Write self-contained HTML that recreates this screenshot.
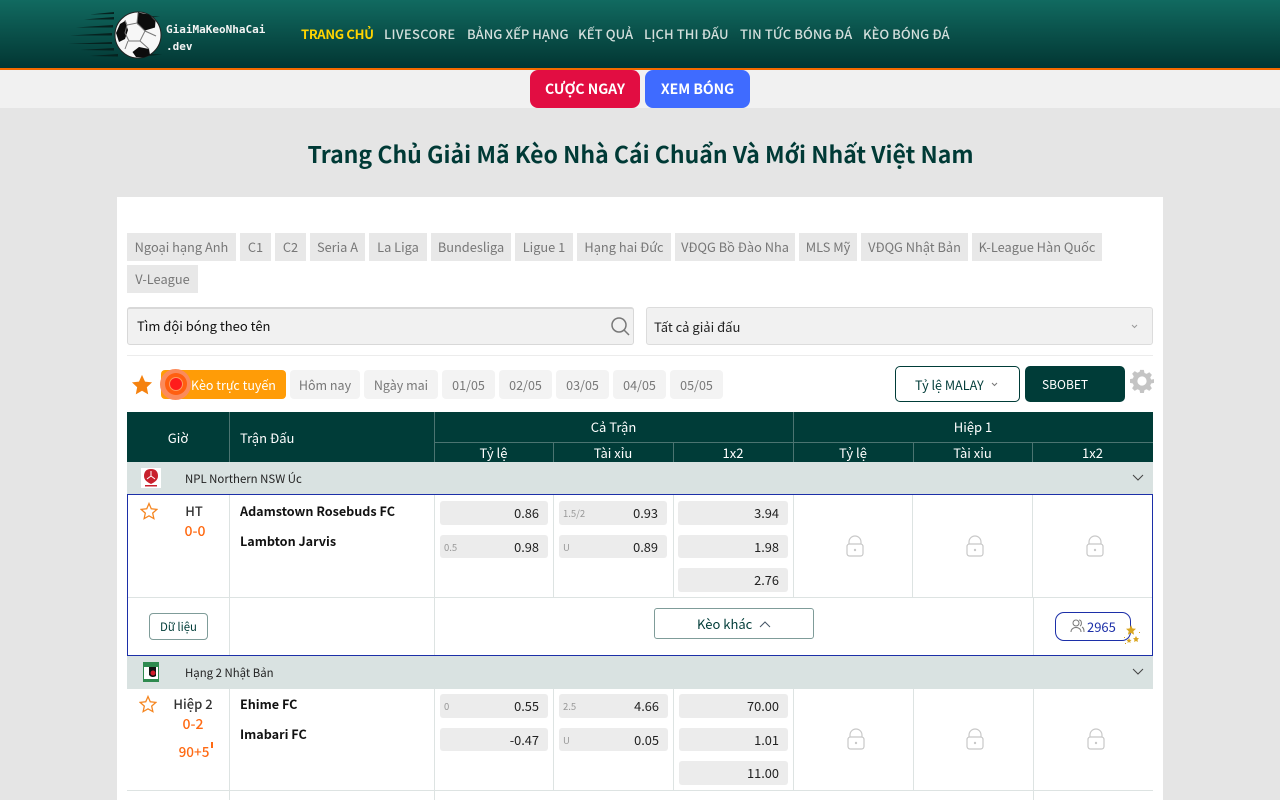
<!DOCTYPE html>
<html lang="vi"><head><meta charset="utf-8"><title>Trang Chủ Giải Mã Kèo Nhà Cái</title>
<style>
*{box-sizing:border-box;margin:0;padding:0}
html,body{width:1280px;height:800px;overflow:hidden;background:#e5e5e5}
body{position:relative;font-family:"Noto Sans CJK JP","Liberation Sans",sans-serif;font-size:13px;color:#222}
.a,.t,.c,.chip,.tab,.o,.l,.h,.v{position:absolute}
.t{white-space:nowrap;line-height:20px}
.c{white-space:nowrap;line-height:20px;text-align:center}
.nav{position:absolute;top:24px;line-height:20px;font-size:13px;font-weight:500;color:#d3dfdc;white-space:nowrap}
.chip{height:28px;background:#e8e8e8;color:#777;font-size:12.8px;line-height:28px;text-align:center;white-space:nowrap}
.tab{top:370px;height:29px;background:#f3f3f3;color:#777;font-size:12.5px;line-height:29px;text-align:center;border-radius:4px;white-space:nowrap}
.o{background:#ececec;border-radius:3px;height:24px;font-size:12.8px;line-height:24px;text-align:right;padding-right:9px;color:#222}
.o i{position:absolute;left:4px;top:0;font-style:normal;font-size:9.5px;color:#999}
.l{background:#d9e2e1}
.h{height:1px}
.v{width:1px}
.team{position:absolute;left:240px;font-weight:700;font-size:12.6px;line-height:20px;color:#111;white-space:nowrap}
.hd{color:#fff;font-size:13px}
.or{color:#ff6a13;font-weight:500;font-size:14px}
</style></head><body>

<div class="a" style="left:0;top:0;width:1280px;height:70px;background:linear-gradient(#116a60,#023633);border-bottom:2px solid #f56a00"></div>
<svg class="a" style="left:68px;top:6px" width="100" height="58" viewBox="0 0 100 58">
<g fill="#06221f"><path d="M46 6L22 8.500 46 8zM46 11L16 13.500 46 13.500zM45 19L8 21.500 45 21.500zM44 27L2 29.500 44 29.500zM44 36L0 38 44 38zM46 42L12 44 46 44.500zM50 48L22 50 50 50.500zM78 10L92 10.500 78 12zM80 48L94 48.500 80 50z"/></g>
<circle cx="70" cy="29" r="23" fill="#f7f7f7" stroke="#222" stroke-width="1"/>
<g fill="#0c0c0c"><path d="M70 6.500l11 2 6.500 6.500-.5 6.500-10 3-8-6.500z"/><path d="M48 27l4-9 5-3 3 9-3 9-6 3z"/><path d="M71 41l10 2 1 6-6 2.500-8-.5-3.500-5z"/></g>
<path d="M59 19l10-2 8 8-5 10-11 0-4-8zM60 35l-3 8M72 35l9 8M77 25l11 5M59 19l-2-5M69 17l1-10" fill="none" stroke="#777" stroke-width="1"/>
</svg>
<div class="t" style="left:166px;top:21px;font:700 11px/17px 'DejaVu Sans Mono','Liberation Mono',monospace;color:#f4f4f4">GiaiMaKeoNhaCai<br>.dev</div>

<div class="nav" style="left:301px;color:#ffd400;font-weight:700;letter-spacing:-.3px">TRANG CHỦ</div>
<div class="nav" style="left:384px;letter-spacing:.3px">LIVESCORE</div>
<div class="nav" style="left:467px">BẢNG XẾP HẠNG</div>
<div class="nav" style="left:578px;letter-spacing:.1px">KẾT QUẢ</div>
<div class="nav" style="left:644px;letter-spacing:.1px">LỊCH THI ĐẤU</div>
<div class="nav" style="left:740px;letter-spacing:.1px">TIN TỨC BÓNG ĐÁ</div>
<div class="nav" style="left:863px">KÈO BÓNG ĐÁ</div>

<div class="a" style="left:0;top:70px;width:1280px;height:38px;background:#f1f1f1"></div>
<div class="c" style="left:530px;top:70px;width:110px;height:38px;line-height:38px;background:#e20d42;border-radius:8px;color:#fff;font-weight:700;font-size:14px">CƯỢC NGAY</div>
<div class="c" style="left:645px;top:70px;width:105px;height:38px;line-height:38px;background:#3f6bff;border-radius:8px;color:#fff;font-weight:700;font-size:14px">XEM BÓNG</div>

<div class="c" style="left:0;top:135px;width:1281px;line-height:36px;font-size:23px;font-weight:700;color:#003a36">Trang Chủ Giải Mã Kèo Nhà Cái Chuẩn Và Mới Nhất Việt Nam</div>

<div class="a" style="left:117px;top:197px;width:1046px;height:603px;background:#fff"></div>

<div class="chip" style="left:127px;top:233px;width:109px">Ngoại hạng Anh</div>
<div class="chip" style="left:240px;top:233px;width:31px">C1</div>
<div class="chip" style="left:275px;top:233px;width:31px">C2</div>
<div class="chip" style="left:310px;top:233px;width:55px">Seria A</div>
<div class="chip" style="left:369px;top:233px;width:58px">La Liga</div>
<div class="chip" style="left:431px;top:233px;width:80px">Bundesliga</div>
<div class="chip" style="left:515px;top:233px;width:58px">Ligue 1</div>
<div class="chip" style="left:577px;top:233px;width:94px">Hạng hai Đức</div>
<div class="chip" style="left:675px;top:233px;width:120px">VĐQG Bồ Đào Nha</div>
<div class="chip" style="left:799px;top:233px;width:58px">MLS Mỹ</div>
<div class="chip" style="left:861px;top:233px;width:107px">VĐQG Nhật Bản</div>
<div class="chip" style="left:972px;top:233px;width:130px">K-League Hàn Quốc</div>
<div class="chip" style="left:127px;top:265px;width:71px">V-League</div>

<div class="a" style="left:127px;top:307px;width:507px;height:38px;background:#f1f1f1;border:1px solid #d8d8d8;border-top:2px solid #d8d8d8;border-radius:3px"></div>
<div class="t" style="left:137px;top:316px;color:#111">Tìm đội bóng theo tên</div>
<svg class="a" style="left:610px;top:316px" width="20" height="20" viewBox="0 0 20 20" fill="none" stroke="#777" stroke-width="1.500"><circle cx="9" cy="9" r="7"/><path d="M14 14l5 5"/></svg>
<div class="a" style="left:646px;top:307px;width:507px;height:38px;background:#f1f1f1;border:1px solid #dcdcdc;border-radius:3px"></div>
<div class="t" style="left:654px;top:317px;color:#222">Tất cả giải đấu</div>
<svg class="a" style="left:1131px;top:324px" width="7" height="5" viewBox="0 0 7 5" fill="none" stroke="#999"><path d="M1 1l2.500 2.500L6 1"/></svg>
<div class="a h" style="left:127px;top:355px;width:1026px;background:#ececec"></div>

<svg class="a" style="left:131px;top:374px" width="22" height="21" viewBox="0 0 24 23"><path fill="#f5820f" d="M12 1l3.300 7.300 7.700.9-5.700 5.300 1.500 7.800L12 18.400l-6.800 3.900 1.500-7.800L1 9.200l7.700-.9z"/></svg>
<div class="tab" style="left:161px;width:125px;background:#ff9c07;color:#fff;text-align:left;padding-left:30px">Kèo trực tuyến</div>
<div class="a" style="left:160px;top:369px;width:31px;height:31px;border-radius:50%;background:#fb8b5b"></div>
<div class="a" style="left:165px;top:373px;width:22px;height:22px;border-radius:50%;background:#ff5f10"></div>
<div class="a" style="left:169px;top:377px;width:14px;height:14px;border-radius:50%;background:#ff1c1c;border:1px solid #ff9a60"></div>
<div class="tab" style="left:290px;width:70px">Hôm nay</div>
<div class="tab" style="left:364px;width:74px">Ngày mai</div>
<div class="tab" style="left:442px;width:53px">01/05</div>
<div class="tab" style="left:499px;width:53px">02/05</div>
<div class="tab" style="left:556px;width:53px">03/05</div>
<div class="tab" style="left:613px;width:53px">04/05</div>
<div class="tab" style="left:670px;width:53px">05/05</div>

<div class="a" style="left:895px;top:366px;width:125px;height:36px;border:1px solid #003c38;border-radius:5px"></div>
<div class="t" style="left:915px;top:375px;color:#003c38;font-size:12.6px">Tỷ lệ MALAY</div>
<svg class="a" style="left:991px;top:382px" width="7" height="5" viewBox="0 0 7 5" fill="none" stroke="#777"><path d="M1 1l2.500 2.500L6 1"/></svg>
<div class="a" style="left:1025px;top:366px;width:100px;height:36px;background:#003c38;border-radius:5px"></div>
<div class="t" style="left:1042px;top:375px;color:#fff;font-size:12px">SBOBET</div>
<svg class="a" style="left:1130px;top:369px" width="24" height="24" viewBox="0 0 26 26"><path fill="#c4c4c4" fill-rule="evenodd" d="M11 1h4l.7 3.300 2.300 1 2.900-1.800 2.800 2.800-1.800 2.900 1 2.300L26 11v4l-3.100.7-1 2.300 1.800 2.900-2.800 2.800-2.900-1.800-2.300 1L15 26h-4l-.7-3.100-2.300-1-2.900 1.800-2.800-2.800 1.800-2.900-1-2.300L0 15v-4l3.100-.7 1-2.300-1.800-2.900 2.800-2.800 2.900 1.800 2.300-1zM13 8a5 5 0 1 0 0 10 5 5 0 0 0 0-10z"/></svg>

<div class="a" style="left:127px;top:412px;width:1026px;height:50px;background:#003c38"></div>
<div class="a h" style="left:434px;top:442px;width:719px;background:#4b7471"></div>
<div class="a v" style="left:229px;top:412px;height:50px;background:#4b7471"></div>
<div class="a v" style="left:434px;top:412px;height:50px;background:#4b7471"></div>
<div class="a v" style="left:793px;top:412px;height:50px;background:#4b7471"></div>
<div class="a v" style="left:553px;top:442px;height:20px;background:#4b7471"></div>
<div class="a v" style="left:673px;top:442px;height:20px;background:#4b7471"></div>
<div class="a v" style="left:913px;top:442px;height:20px;background:#4b7471"></div>
<div class="a v" style="left:1032px;top:442px;height:20px;background:#4b7471"></div>
<div class="c hd" style="left:127px;top:428px;width:102px">Giờ</div>
<div class="t hd" style="left:240px;top:428px">Trận Đấu</div>
<div class="c hd" style="left:434px;top:417px;width:359px">Cả Trận</div>
<div class="c hd" style="left:793px;top:417px;width:360px">Hiệp 1</div>
<div class="c hd" style="left:434px;top:443px;width:119px">Tỷ lệ</div>
<div class="c hd" style="left:553px;top:443px;width:120px">Tài xỉu</div>
<div class="c hd" style="left:673px;top:443px;width:120px">1x2</div>
<div class="c hd" style="left:793px;top:443px;width:120px">Tỷ lệ</div>
<div class="c hd" style="left:913px;top:443px;width:119px">Tài xỉu</div>
<div class="c hd" style="left:1032px;top:443px;width:121px">1x2</div>

<!-- League 1 -->
<div class="l" style="left:127px;top:462px;width:1026px;height:33px"></div>
<svg class="a" style="left:141px;top:468px" width="20" height="20" viewBox="0 0 20 20"><rect width="20" height="20" fill="#fff"/><path d="M10 1c5 0 7 3 7 7 0 4-3 6-7 8-4-2-7-4-7-8 0-4 2-7 7-7z" fill="#c8202c"/><path d="M10 3v5M6 11l4-3 4 3" stroke="#fff" fill="none"/><rect x="4" y="17" width="12" height="1.500" fill="#c8202c"/></svg>
<div class="t" style="left:185px;top:469px;font-size:11.4px;color:#222">NPL Northern NSW Úc</div>
<svg class="a" style="left:1132px;top:474px" width="12" height="7" viewBox="0 0 12 7" fill="none" stroke="#444"><path d="M1 1l5 5 5-5"/></svg>

<!-- Match 1 -->
<div class="a" style="left:127px;top:494px;width:1026px;height:162px;border:1px solid #1c2fa8;z-index:3"></div>
<div class="a h" style="left:128px;top:597px;width:1024px;background:#dde3e2"></div>
<div class="a v" style="left:229px;top:495px;height:161px;background:#dde3e2"></div>
<div class="a v" style="left:434px;top:495px;height:161px;background:#dde3e2"></div>
<div class="a v" style="left:553px;top:495px;height:102px;background:#dde3e2"></div>
<div class="a v" style="left:673px;top:495px;height:102px;background:#dde3e2"></div>
<div class="a v" style="left:793px;top:495px;height:102px;background:#dde3e2"></div>
<div class="a v" style="left:912px;top:495px;height:102px;background:#dde3e2"></div>
<div class="a v" style="left:1032px;top:495px;height:102px;background:#dde3e2"></div>
<div class="a v" style="left:1033px;top:598px;height:58px;background:#dde3e2"></div>

<svg class="a" style="left:140px;top:502px" width="18" height="18" viewBox="0 0 24 24" fill="none" stroke="#f5851f" stroke-width="1.700"><path d="M12 2l3 7 7.500.8-5.600 5 1.600 7.400L12 18.500l-6.500 3.700 1.600-7.400-5.600-5L9 9z"/></svg>
<div class="c" style="left:174px;top:501px;width:40px;font-size:13px;font-weight:500;color:#333">HT</div>
<div class="c or" style="left:175px;top:521px;width:40px">0-0</div>
<div class="team" style="top:501px">Adamstown Rosebuds FC</div>
<div class="team" style="top:531px">Lambton Jarvis</div>

<div class="o" style="left:440px;top:501px;width:108px">0.86</div>
<div class="o" style="left:440px;top:535px;width:108px;height:23px"><i>0.5</i>0.98</div>
<div class="o" style="left:559px;top:501px;width:108px"><i>1.5/2</i>0.93</div>
<div class="o" style="left:559px;top:535px;width:108px;height:23px"><i>U</i>0.89</div>
<div class="o" style="left:678px;top:501px;width:110px">3.94</div>
<div class="o" style="left:678px;top:535px;width:110px;height:23px">1.98</div>
<div class="o" style="left:678px;top:568px;width:110px">2.76</div>

<svg class="a" style="left:845px;top:535px" width="20" height="22" viewBox="0 0 20 22" fill="none" stroke="#c8c8c8" stroke-width="1.200"><path d="M4 9V7a6 6 0 0 1 12 0v2"/><rect x="2" y="9" width="16" height="12" rx="2.500"/><circle cx="10" cy="15" r=".6"/></svg>
<svg class="a" style="left:965px;top:535px" width="20" height="22" viewBox="0 0 20 22" fill="none" stroke="#c8c8c8" stroke-width="1.200"><path d="M4 9V7a6 6 0 0 1 12 0v2"/><rect x="2" y="9" width="16" height="12" rx="2.500"/><circle cx="10" cy="15" r=".6"/></svg>
<svg class="a" style="left:1085px;top:535px" width="20" height="22" viewBox="0 0 20 22" fill="none" stroke="#c8c8c8" stroke-width="1.200"><path d="M4 9V7a6 6 0 0 1 12 0v2"/><rect x="2" y="9" width="16" height="12" rx="2.500"/><circle cx="10" cy="15" r=".6"/></svg>

<div class="c" style="left:149px;top:613px;width:59px;height:27px;line-height:26px;border:1px solid #7f9c99;border-radius:4px;font-size:11.400px;color:#003c38">Dữ liệu</div>
<div class="a" style="left:654px;top:608px;width:160px;height:31px;border:1px solid #7f9c99;border-radius:3px"></div>
<div class="t" style="left:697px;top:614px;color:#003c38">Kèo khác</div>
<svg class="a" style="left:759px;top:620px" width="12" height="8" viewBox="0 0 12 8" fill="none" stroke="#456"><path d="M1 7l5-5 5 5"/></svg>
<div class="a" style="left:1055px;top:612px;width:76px;height:29px;border:1px solid #1c2fa8;border-radius:9px"></div>
<svg class="a" style="left:1070px;top:619px" width="15" height="14" viewBox="0 0 15 14" fill="none" stroke="#777"><circle cx="6" cy="4" r="3"/><path d="M1 13c0-6 10-6 10 0M9 1c3 0 3 5 1 6M12 8c2 1 2 3 2 5"/></svg>
<div class="t" style="left:1087px;top:617px;color:#1c2fa8;font-size:13px">2965</div>
<svg class="a" style="left:1120px;top:625px;z-index:4" width="22" height="22" viewBox="0 0 22 22" fill="#d9a520"><polygon points="11,0 12.500,3.500 16,3.800 13.300,6.200 14.100,9.800 11,7.900 7.900,9.800 8.700,6.200 6,3.800 9.500,3.500"/><polygon points="16,11 17,13 19,13.300 17.500,14.800 17.900,17 16,16 14.100,17 14.500,14.800 13,13.300 15,13"/><polygon points="9,13 9.800,14.800 11.500,15 10.200,16.200 10.600,18 9,17 7.400,18 7.800,16.200 6.500,15 8.200,14.800"/><rect x="4" y="12" width="1" height="1"/><rect x="5" y="18" width="1" height="1"/><rect x="19" y="7" width="1" height="1"/></svg>

<!-- League 2 -->
<div class="l" style="left:127px;top:656px;width:1026px;height:33px"></div>
<svg class="a" style="left:143px;top:662px" width="16" height="20" viewBox="0 0 16 20"><rect width="16" height="20" fill="#2e8a4f"/><rect x="1" y="5" width="14" height="12" fill="#fff"/><path d="M6 5h7v9a5 5 0 0 1-7-1z" fill="#111"/><circle cx="10" cy="11" r="2.500" fill="#d01c2a"/></svg>
<div class="t" style="left:185px;top:663px;font-size:11.4px;color:#222">Hạng 2 Nhật Bản</div>
<svg class="a" style="left:1132px;top:668px" width="12" height="7" viewBox="0 0 12 7" fill="none" stroke="#444"><path d="M1 1l5 5 5-5"/></svg>

<!-- Match 2 -->
<div class="a h" style="left:127px;top:790px;width:1026px;background:#dde3e2"></div>
<div class="a v" style="left:229px;top:689px;height:111px;background:#dde3e2"></div>
<div class="a v" style="left:434px;top:689px;height:111px;background:#dde3e2"></div>
<div class="a v" style="left:553px;top:689px;height:101px;background:#dde3e2"></div>
<div class="a v" style="left:673px;top:689px;height:101px;background:#dde3e2"></div>
<div class="a v" style="left:793px;top:689px;height:101px;background:#dde3e2"></div>
<div class="a v" style="left:913px;top:689px;height:101px;background:#dde3e2"></div>
<div class="a v" style="left:1033px;top:689px;height:111px;background:#dde3e2"></div>

<svg class="a" style="left:139px;top:695px" width="18" height="18" viewBox="0 0 24 24" fill="none" stroke="#f5851f" stroke-width="1.700"><path d="M12 2l3 7 7.500.8-5.600 5 1.600 7.400L12 18.500l-6.500 3.700 1.600-7.400-5.600-5L9 9z"/></svg>
<div class="c" style="left:163px;top:694px;width:60px;font-size:13px;font-weight:500;color:#333">Hiệp 2</div>
<div class="c or" style="left:173px;top:714px;width:40px">0-2</div>
<div class="c or" style="left:174px;top:741px;width:40px;font-size:13.500px">90+5</div>
<div class="a" style="left:211px;top:742px;width:2px;height:6px;background:#ff6a13"></div>
<div class="team" style="top:694px">Ehime FC</div>
<div class="team" style="top:724px">Imabari FC</div>

<div class="o" style="left:440px;top:694px;width:108px"><i>0</i>0.55</div>
<div class="o" style="left:440px;top:728px;width:108px;height:23px">-0.47</div>
<div class="o" style="left:559px;top:694px;width:109px"><i>2.5</i>4.66</div>
<div class="o" style="left:559px;top:728px;width:109px;height:23px"><i>U</i>0.05</div>
<div class="o" style="left:679px;top:694px;width:109px">70.00</div>
<div class="o" style="left:679px;top:728px;width:109px;height:23px">1.01</div>
<div class="o" style="left:679px;top:761px;width:109px">11.00</div>

<svg class="a" style="left:846px;top:728px" width="20" height="22" viewBox="0 0 20 22" fill="none" stroke="#c8c8c8" stroke-width="1.200"><path d="M4 9V7a6 6 0 0 1 12 0v2"/><rect x="2" y="9" width="16" height="12" rx="2.500"/><circle cx="10" cy="15" r=".6"/></svg>
<svg class="a" style="left:965px;top:728px" width="20" height="22" viewBox="0 0 20 22" fill="none" stroke="#c8c8c8" stroke-width="1.200"><path d="M4 9V7a6 6 0 0 1 12 0v2"/><rect x="2" y="9" width="16" height="12" rx="2.500"/><circle cx="10" cy="15" r=".6"/></svg>
<svg class="a" style="left:1086px;top:728px" width="20" height="22" viewBox="0 0 20 22" fill="none" stroke="#c8c8c8" stroke-width="1.200"><path d="M4 9V7a6 6 0 0 1 12 0v2"/><rect x="2" y="9" width="16" height="12" rx="2.500"/><circle cx="10" cy="15" r=".6"/></svg>
</body></html>
